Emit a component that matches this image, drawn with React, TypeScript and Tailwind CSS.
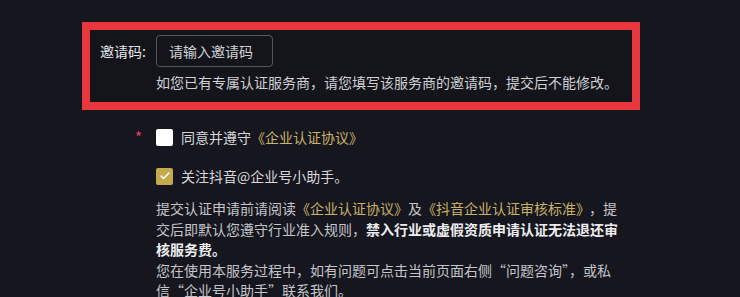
import { Check } from 'lucide-react';

const FONT = { fontFamily: '"Noto Sans CJK SC", "Noto Sans", sans-serif' };

export default function App() {
  return (
    <div className="w-[740px] h-[297px] overflow-hidden bg-[#16171e] text-[14px] text-[#d6d6da]" style={FONT}>
      <div className="pt-[22px] pl-[82px]">
        {/* 邀请码 — 红框标注 */}
        <div className="w-[558px] border-8 border-[#e8383d] bg-[#14151b] pl-[10px] pt-[5px] pb-[10px]">
          <div className="flex items-center">
            <span className="w-[56px] text-[#e4e4e8]">邀请码:</span>
            <div className="w-[117px] h-[32px] rounded-[4px] border border-[#55565e] flex items-center pl-[12px] text-[#d2d2d6]">
              请输入邀请码
            </div>
          </div>
          <p className="ml-[56px] mt-[5px] leading-[20px] text-[#d0d0d4]">
            如您已有专属认证服务商，请您填写该服务商的邀请码，提交后不能修改。
          </p>
        </div>

        {/* 协议勾选 */}
        <div className="flex items-center h-[20px] mt-[17px]">
          <span className="w-[74px] pr-[14px] text-right text-[#e0405f] text-[15px]">*</span>
          <span className="w-[17px] h-[17px] rounded-[2px] bg-white" />
          <span className="ml-[8px]">
            同意并遵守<span className="text-[#c8b169]">《企业认证协议》</span>
          </span>
        </div>

        <div className="flex items-center h-[20px] mt-[19px] pl-[74px]">
          <span className="w-[17px] h-[17px] rounded-[2px] bg-[#c4aa4c] flex items-center justify-center">
            <Check className="w-[12px] h-[12px] text-white" strokeWidth={3} />
          </span>
          <span className="ml-[8px]">关注抖音@企业号小助手。</span>
        </div>

        <p className="ml-[74px] mt-[12px] w-[463px] leading-[20.5px] text-[#c4c4c9]">
          提交认证申请前请阅读<span className="text-[#c8b169]">《企业认证协议》</span>及<span className="text-[#c8b169] mr-[6px]">《抖音企业认证审核标准》</span>，提交后即默认您遵守行业准入规则，<span className="font-bold text-[#ececef]">禁入行业或虚假资质申请认证无法退还审核服务费。</span>
          <br />
          您在使用本服务过程中，如有问题可点击当前页面右侧“问题咨询”，或私信“企业号小助手”联系我们。
        </p>
      </div>
    </div>
  );
}
